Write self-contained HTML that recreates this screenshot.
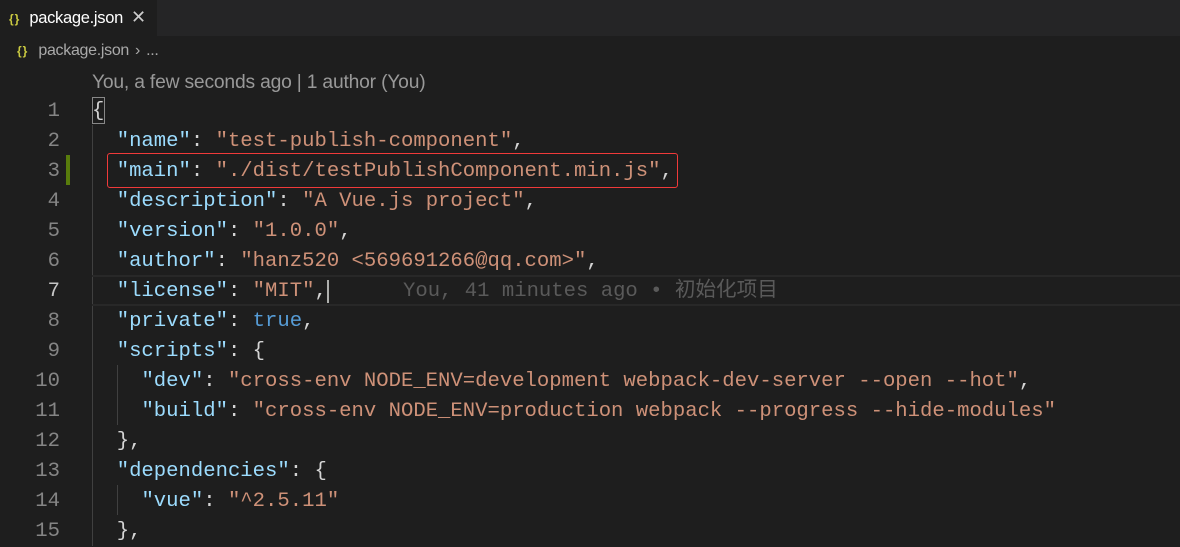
<!DOCTYPE html>
<html><head><meta charset="utf-8"><style>
*{margin:0;padding:0;box-sizing:border-box}
body{width:1180px;height:546px;background:#1e1e1e;overflow:hidden;position:relative;font-family:"Liberation Sans",sans-serif}
.tabbar{position:absolute;left:0;top:0;width:1180px;height:36px;background:#252526}
.tab{position:absolute;left:0;top:0;width:157px;height:36px;background:#1e1e1e;color:#fff;font-size:16.5px;line-height:34px;letter-spacing:-0.3px}
.br{position:absolute;left:0;top:38px;height:26px;color:#a9a9a9;font-size:16px;line-height:26px;letter-spacing:-0.3px}
.ic{color:#cbcb41;font-weight:bold;font-size:12px;letter-spacing:1px}
.lens{position:absolute;left:92px;top:71px;color:#999;font-size:19.3px;line-height:24px;letter-spacing:-0.2px}
.ln{position:absolute;left:0;width:60px;text-align:right;color:#858585;font-family:"Liberation Mono",monospace;font-size:20.6px;line-height:30px}
.cl{position:absolute;left:92px;font-family:"Liberation Mono","Noto Sans CJK SC",monospace;font-size:20.6px;line-height:30px;color:#d4d4d4;white-space:pre}
.k{color:#9cdcfe}.s{color:#ce9178}.b{color:#569cd6}
.blame{color:#5a5a5a}
.ln,.cl{margin-top:2px}
</style></head><body>
<div class="tabbar"><div class="tab"><span class="ic" style="margin-left:9px">{}</span><span style="margin-left:9px">package.json</span><span style="margin-left:8px;font-size:18px;color:#ccc">✕</span></div></div>
<div class="br"><span class="ic" style="margin-left:17px">{}</span><span style="margin-left:10px">package.json</span><span style="margin-left:6px">›</span><span style="margin-left:6px">...</span></div>
<div class="lens">You, a few seconds ago | 1 author (You)</div>

<div style="position:absolute;left:92px;top:125px;width:1px;height:421px;background:#404040"></div>
<div style="position:absolute;left:117px;top:365px;width:1px;height:60px;background:#404040"></div>
<div style="position:absolute;left:117px;top:485px;width:1px;height:30px;background:#404040"></div>
<div style="position:absolute;left:92px;top:275px;width:1088px;height:31px;border-top:2px solid #282828;border-bottom:2px solid #282828"></div>
<div style="position:absolute;left:92px;top:97px;width:13px;height:27px;border:1px solid #888"></div>
<div style="position:absolute;left:66px;top:155px;width:4px;height:30px;background:#587c0c"></div>
<div style="position:absolute;left:107px;top:153px;width:571px;height:35px;border:1px solid #f03a3a;border-radius:3px"></div>

<div class="ln" style="top:95px">1</div><div class="cl" style="top:95px">{</div>
<div class="ln" style="top:125px">2</div><div class="cl" style="top:125px">  <span class="k">"name"</span>: <span class="s">"test-publish-component"</span>,</div>
<div class="ln" style="top:155px">3</div><div class="cl" style="top:155px">  <span class="k">"main"</span>: <span class="s">"./dist/testPublishComponent.min.js"</span>,</div>
<div class="ln" style="top:185px">4</div><div class="cl" style="top:185px">  <span class="k">"description"</span>: <span class="s">"A Vue.js project"</span>,</div>
<div class="ln" style="top:215px">5</div><div class="cl" style="top:215px">  <span class="k">"version"</span>: <span class="s">"1.0.0"</span>,</div>
<div class="ln" style="top:245px">6</div><div class="cl" style="top:245px">  <span class="k">"author"</span>: <span class="s">"hanz520 &lt;569691266@qq.com&gt;"</span>,</div>
<div class="ln" style="top:275px;color:#c6c6c6">7</div><div class="cl" style="top:275px">  <span class="k">"license"</span>: <span class="s">"MIT"</span>,<span style="border-left:2px solid #aeafad"></span>      <span class="blame">You, 41 minutes ago • 初始化项目</span></div>
<div class="ln" style="top:305px">8</div><div class="cl" style="top:305px">  <span class="k">"private"</span>: <span class="b">true</span>,</div>
<div class="ln" style="top:335px">9</div><div class="cl" style="top:335px">  <span class="k">"scripts"</span>: {</div>
<div class="ln" style="top:365px">10</div><div class="cl" style="top:365px">    <span class="k">"dev"</span>: <span class="s">"cross-env NODE_ENV=development webpack-dev-server --open --hot"</span>,</div>
<div class="ln" style="top:395px">11</div><div class="cl" style="top:395px">    <span class="k">"build"</span>: <span class="s">"cross-env NODE_ENV=production webpack --progress --hide-modules"</span></div>
<div class="ln" style="top:425px">12</div><div class="cl" style="top:425px">  },</div>
<div class="ln" style="top:455px">13</div><div class="cl" style="top:455px">  <span class="k">"dependencies"</span>: {</div>
<div class="ln" style="top:485px">14</div><div class="cl" style="top:485px">    <span class="k">"vue"</span>: <span class="s">"^2.5.11"</span></div>
<div class="ln" style="top:515px">15</div><div class="cl" style="top:515px">  },</div>
</body></html>
